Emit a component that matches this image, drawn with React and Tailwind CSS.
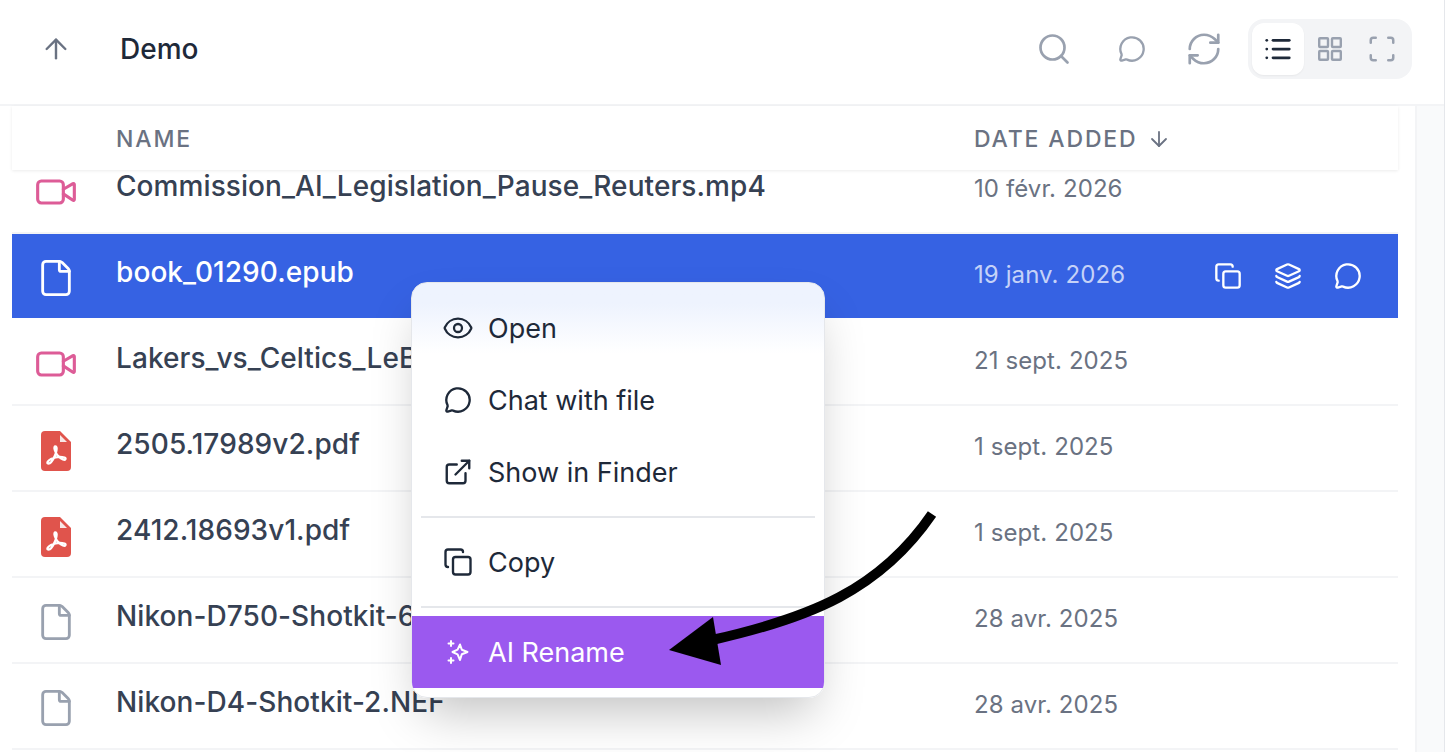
import { ArrowUp, ArrowDown, Search, MessageCircle, RefreshCw, List, Scan, Copy, Layers, Eye, ExternalLink, Video, File } from 'lucide-react';

const PdfIcon = () => (
  <svg className="mt-[6px]" width="30" height="40" viewBox="0 0 30 40">
    <path d="M4 0H19L30 11V36a4 4 0 0 1-4 4H4a4 4 0 0 1-4-4V4a4 4 0 0 1 4-4z" fill="#e0544c" />
    <path d="M19 4L26 11H19z" fill="#f8e8e6" />
    <path d="M15 15.500c-1.500-.5-2 .8-1.200 3.500c1.200 4 3.800 7.500 8.200 9.500c2.500 1 3.500-1.200 1.500-2c-4-1.200-9-.6-13.500 1.500c-3 1.500-4.500 4-3 4.500c2 .5 5-3.500 7-8c1.300-3 2.300-8.500 1-8.500z" fill="none" stroke="#fff" strokeWidth="2.300" strokeLinejoin="round" />
  </svg>
);

const SparkIcon = () => (
  <svg width="26" height="26" viewBox="0 0 26 26" fill="none" stroke="currentColor" strokeWidth="2" strokeLinejoin="round" strokeLinecap="round">
    <path d="M15 5.500l1.800 5.200 5.700 2.300-5.700 2.300-1.800 5.700-2.400-5.700-5.100-2.300 5.100-2.300z" />
    <path d="M6 2v5M3.500 4.500h5M6 19v5M3.500 21.500h5" />
  </svg>
);

const GridIcon = () => (
  <svg width="24" height="24" viewBox="0 0 24 24" fill="none" stroke="currentColor" strokeWidth="2.400">
    <rect x="1.200" y="1.200" width="8.800" height="8.800" rx="0.800" />
    <rect x="14" y="1.200" width="8.800" height="8.800" rx="0.800" />
    <rect x="1.200" y="14" width="8.800" height="8.800" rx="0.800" />
    <rect x="14" y="14" width="8.800" height="8.800" rx="0.800" />
  </svg>
);

const VideoIcon = () => <Video className="mt-[4px] w-[44px] h-[44px] text-[#dd5c97]" strokeWidth={1.700} />;
const FileIcon = ({ className }) => <File className={`mt-[3px] w-[40px] h-[40px] ${className}`} strokeWidth={1.700} />;

// names stop where the context menu covers them in the screenshot
const rows = [
  { name: 'Commission_AI_Legislation_Pause_Reuters.mp4', date: '10 févr. 2026', icon: <VideoIcon /> },
  { name: 'book_01290.epub', date: '19 janv. 2026', icon: <FileIcon className="text-white" />, selected: true },
  { name: 'Lakers_vs_Celtics_LeB', date: '21 sept. 2025', icon: <VideoIcon /> },
  { name: '2505.17989v2.pdf', date: '1 sept. 2025', icon: <PdfIcon /> },
  { name: '2412.18693v1.pdf', date: '1 sept. 2025', icon: <PdfIcon /> },
  { name: 'Nikon-D750-Shotkit-6', date: '28 avr. 2025', icon: <FileIcon className="text-gray-400" /> },
  { name: 'Nikon-D4-Shotkit-2.NEF', date: '28 avr. 2025', icon: <FileIcon className="text-gray-400" /> },
];

const MenuItem = ({ icon, label }) => (
  <div className="h-[72px] flex items-center gap-[17px] pl-[33px] text-[27px] text-gray-800">
    <div className="w-[26px] flex justify-center">{icon}</div>
    <span className="mt-[2px]">{label}</span>
  </div>
);

const Divider = () => <div className="h-[2px] my-2 mx-[9px] bg-gray-200" />;

const App = () => {
  return (
    <div className="relative w-[1448px] h-[752px] overflow-hidden bg-white font-['Inter',sans-serif]">
      <div className="w-[1445px] h-full flex flex-col border-r border-gray-200">
        <header className="h-[106px] shrink-0 flex items-center border-b-2 border-gray-100 pb-[6px]">
          <ArrowUp className="ml-[40px] w-[32px] h-[32px] text-gray-500" strokeWidth={1.800} />
          <h1 className="ml-[48px] text-[28px] font-medium text-gray-800">Demo</h1>
          <div className="ml-auto flex items-center text-gray-400">
            <Search className="w-[36px] h-[36px]" strokeWidth={1.800} />
            <MessageCircle className="ml-[46px] w-[28px] h-[28px]" strokeWidth={2} />
            <RefreshCw className="ml-[39px] w-[38px] h-[38px]" strokeWidth={1.700} />
            <div className="ml-[25px] mr-[32px] flex items-center p-[4px] rounded-2xl bg-gray-100">
              <div className="w-[52px] h-[52px] flex items-center justify-center rounded-xl bg-white shadow-xs text-gray-800">
                <List className="w-[30px] h-[30px]" strokeWidth={2.200} />
              </div>
              <div className="w-[52px] h-[52px] flex items-center justify-center">
                <GridIcon />
              </div>
              <div className="w-[52px] h-[52px] flex items-center justify-center">
                <Scan className="w-[30px] h-[30px]" strokeWidth={2} />
              </div>
            </div>
          </div>
        </header>

        <div className="flex-1 flex min-h-0">
          <div className="flex-1 min-w-0 pl-[12px] pr-[17px]">
            <div className="relative z-10 h-[64px] flex items-center pt-[2px] bg-white shadow-[0_1px_3px_rgba(0,0,0,0.08)] text-[23px] font-medium tracking-[0.08em] text-gray-500">
              <span className="ml-[104px] w-[858px]">NAME</span>
              <span className="flex items-center gap-[10px]">
                DATE ADDED
                <ArrowDown className="w-[24px] h-[24px]" strokeWidth={1.800} />
              </span>
            </div>
            <div className="-mt-[22px]">
              {rows.map((row) => (
                <div
                  key={row.name}
                  className={`h-[86px] flex border-b-2 ${row.selected ? 'border-white' : 'border-gray-100'}`}
                >
                  <div className={`flex-1 flex items-center ${row.selected ? 'bg-[#3662e3]' : ''}`}>
                    <div className="w-[88px] flex justify-center">{row.icon}</div>
                    <span className={`ml-[16px] w-[858px] shrink-0 -mt-[8px] text-[28px] font-medium tracking-[0.08px] whitespace-nowrap ${row.selected ? 'text-white' : 'text-gray-700'}`}>
                      {row.name}
                    </span>
                    <span className={`-mt-[2px] text-[24px] tracking-[0.004em] ${row.selected ? 'text-[#c5d2f8]' : 'text-gray-500'}`}>
                      {row.date}
                    </span>
                    {row.selected && (
                      <div className="ml-auto mr-[36px] flex items-center gap-[32px] text-white">
                        <Copy className="w-[28px] h-[28px]" strokeWidth={2} />
                        <Layers className="w-[28px] h-[28px]" strokeWidth={2} />
                        <MessageCircle className="w-[28px] h-[28px]" strokeWidth={2} />
                      </div>
                    )}
                  </div>
                </div>
              ))}
            </div>
          </div>
          <div className="w-[29px] shrink-0 border-l-2 border-gray-100 bg-gray-50" />
        </div>
      </div>

      <div className="absolute z-20 left-[411px] top-[282px] w-[414px] py-[9px] rounded-2xl border border-gray-200 bg-linear-to-b from-[#eef3fe] from-[5%] to-white to-[17%] shadow-2xl overflow-hidden">
        <MenuItem icon={<Eye className="shrink-0 w-[32px] h-[32px]" strokeWidth={1.700} />} label="Open" />
        <MenuItem icon={<MessageCircle className="shrink-0 w-[28px] h-[28px]" strokeWidth={2} />} label="Chat with file" />
        <MenuItem icon={<ExternalLink className="shrink-0 w-[30px] h-[30px]" strokeWidth={1.900} />} label="Show in Finder" />
        <Divider />
        <MenuItem icon={<Copy className="shrink-0 w-[30px] h-[30px]" strokeWidth={1.900} />} label="Copy" />
        <Divider />
        <div className="h-[72px] flex items-center gap-[17px] pl-[33px] text-[27px] text-white bg-[#9b59ef]">
          <SparkIcon />
          <span className="mt-[2px]">AI Rename</span>
        </div>
      </div>

      <svg className="absolute z-30 left-[660px] top-[505px]" width="285" height="170" viewBox="660 505 285 170">
        <path d="M932 514C880 590 810 618 712 640" fill="none" stroke="#000" strokeWidth="10" />
        <path d="M669 650L713 617L721 665z" fill="#000" />
      </svg>
    </div>
  );
};

export default App;
